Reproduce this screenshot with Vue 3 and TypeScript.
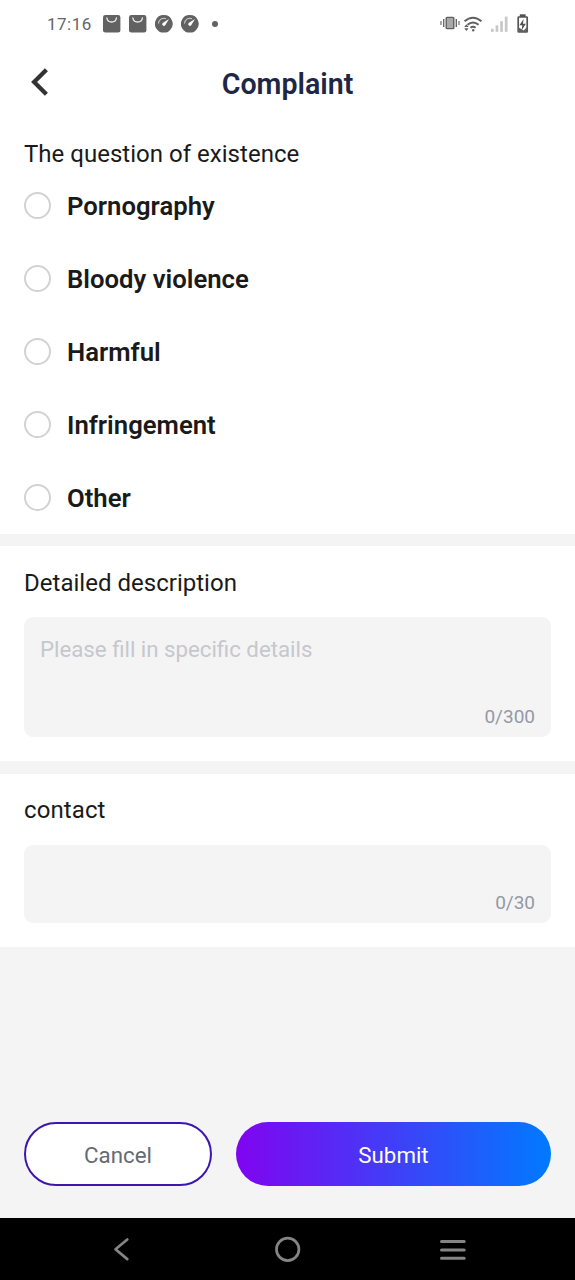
<script setup lang="ts">
import { ref } from 'vue'

const reasons: string[] = ['Pornography', 'Bloody violence', 'Harmful', 'Infringement', 'Other']
const selected = ref<string>('')
const description = ref<string>('')
const contact = ref<string>('')
</script>

<template>
  <div class="screen">
    <div class="status">
      <span class="time">17:16</span>
      <svg v-for="n in 2" :key="'bag' + n" class="status-icon" width="18" height="18" viewBox="0 0 18 18">
        <rect x="0" y="0" width="17.400" height="17.6" rx="2.4" fill="#626262" />
        <path d="M3.900 3c.6 5.300 8.900 5.300 9.500 0" fill="none" stroke="#eee" stroke-width="1.300" stroke-linecap="round" />
      </svg>
      <svg v-for="n in 2" :key="'gauge' + n" class="status-icon" width="18" height="18" viewBox="0 0 18 18">
        <path d="M8.800 0a8.800 8.800 0 0 1 6.300 15L13.200 16.700Q12.300 17.500 10.800 17.500H6.800Q5.300 17.500 4.400 16.700L2.500 15A8.800 8.800 0 0 1 8.800 0z" fill="#626262" />
        <path d="M3.500 8.600A5.400 5.400 0 0 1 11 3.700" fill="none" stroke="#ccc" stroke-width="1.100" />
        <path d="M14 4.100L7.700 7.900a1.700 1.700 0 1 0 2.500 2.300z" fill="#fff" />
      </svg>
      <i class="dot"></i>
      <div class="status-right">
        <svg width="90" height="20" viewBox="0 0 90 20">
          <rect x="6.200" y="3.400" width="7.600" height="11.200" rx="0.800" fill="#a8a8a8" stroke="#606060" stroke-width="1.400" />
          <path d="M3.700 5v8M16.300 5v8" stroke="#686868" stroke-width="1.400" />
          <path d="M1 7v4M19 7v4" stroke="#777" stroke-width="1.300" />
          <g fill="none" stroke="#606060" stroke-width="2">
            <path d="M24.500 7.300Q33 .2 41.500 7.300" />
            <path d="M27.500 10.800Q33 6.200 38.600 10.800" />
            <path d="M30.500 13.800Q33 11.800 35.600 13.800" />
          </g>
          <circle cx="33.200" cy="16.200" r="1.200" fill="#606060" />
          <path d="M26.400 10.200l2.200 2.700h-4.400zM26.400 17l2.200-2.700h-4.400z" fill="#606060" />
          <rect x="51" y="14.800" width="2.700" height="3" fill="#c8c8c8" />
          <rect x="55.600" y="11.400" width="2.700" height="6.400" fill="#c8c8c8" />
          <rect x="60.200" y="7.200" width="2.700" height="10.600" fill="#c8c8c8" />
          <rect x="64.800" y="2.600" width="2.700" height="15.200" fill="#c8c8c8" />
          <rect x="79.800" y="0.300" width="5.800" height="3" fill="#505050" />
          <rect x="78.200" y="3" width="9" height="15" rx="0.600" fill="#fff" stroke="#555" stroke-width="1.700" />
          <path d="M78 13l3.200 2 2.400 1.500 4-4V18H78z" fill="#606060" />
          <path d="M83.600 5l-4.200 6.300h2.900l-.7 5 4.300-6.500H83z" fill="#505050" />
        </svg>
      </div>
    </div>

    <header class="header">
      <button class="back" type="button" aria-label="Back">
        <svg width="20" height="32" viewBox="0 0 20 32">
          <path d="M17.400 2.800L5.100 15L17.400 27.200" fill="none" stroke="#333" stroke-width="4.300" stroke-linejoin="miter" />
        </svg>
      </button>
      <h1>Complaint</h1>
    </header>

    <section class="reasons">
      <h2>The question of existence</h2>
      <label v-for="reason in reasons" :key="reason" class="reason">
        <input v-model="selected" type="radio" name="reason" :value="reason" />
        <span>{{ reason }}</span>
      </label>
    </section>

    <section class="details">
      <h2>Detailed description</h2>
      <div class="field field-large">
        <textarea v-model="description" maxlength="300" placeholder="Please fill in specific details"></textarea>
        <span class="count">{{ description.length }}/300</span>
      </div>
    </section>

    <section class="contact">
      <h2 class="contact-title">contact</h2>
      <div class="field field-small">
        <textarea v-model="contact" maxlength="30"></textarea>
        <span class="count">{{ contact.length }}/30</span>
      </div>
    </section>

    <footer class="actions">
      <button class="cancel" type="button">Cancel</button>
      <button class="submit" type="button">Submit</button>
    </footer>

    <nav class="nav">
      <svg width="30" height="30" viewBox="0 0 30 30">
        <path d="M21.300 5.500L9.500 15.300L21.300 25.100" fill="none" stroke="#858585" stroke-width="2.700" stroke-linecap="round" stroke-linejoin="round" />
      </svg>
      <svg width="30" height="30" viewBox="0 0 30 30">
        <circle cx="15.700" cy="15.400" r="11.200" fill="none" stroke="#858585" stroke-width="2.700" />
      </svg>
      <svg width="30" height="30" viewBox="0 0 30 30">
        <path d="M3.500 7.400h22.700M3.500 15.900h22.700M3.500 24.200h22.700" stroke="#858585" stroke-width="3" stroke-linecap="round" />
      </svg>
    </nav>
  </div>
</template>

<style>
body {
  margin: 0;
  background: #f4f4f4;
}
</style>

<style scoped>
.screen {
  width: 575px;
  height: 1280px;
  display: flex;
  flex-direction: column;
  background: #f4f4f4;
  font-family: Roboto, "Liberation Sans", sans-serif;
  color: #1a1a1a;
  overflow: hidden;
}
.screen * {
  box-sizing: border-box;
}
button,
textarea {
  font-family: inherit;
}
.status {
  height: 48px;
  flex: none;
  display: flex;
  align-items: center;
  padding: 0 45px 0 47px;
  background: #fff;
}
.time {
  width: 56px;
  font-size: 17px;
  line-height: 20px;
  letter-spacing: 0.5px;
  color: #666;
}
.status-icon {
  flex: none;
  margin-right: 8px;
}
.dot {
  width: 6px;
  height: 6px;
  margin-left: 5px;
  border-radius: 50%;
  background: #626262;
}
.status-right {
  margin-left: auto;
  display: flex;
}
.header {
  height: 72px;
  flex: none;
  display: grid;
  grid-template-columns: 60px 1fr 60px;
  align-items: center;
  background: #fff;
}
.back {
  width: 32px;
  height: 32px;
  margin: 0 0 3px 29px;
  padding: 0;
  border: 0;
  background: none;
  display: flex;
}
h1 {
  margin: 0;
  text-align: center;
  font-size: 28.6px;
  line-height: 34px;
  font-weight: 600;
  color: #1e2746;
}
section {
  flex: none;
  padding: 0 24px;
  background: #fff;
}
h2 {
  margin: 0;
  font-size: 24px;
  line-height: 28px;
  font-weight: 400;
  letter-spacing: 0.02px;
}
.reasons {
  height: 414px;
  padding-top: 20px;
}
.reason {
  height: 73px;
  display: flex;
  align-items: center;
  gap: 16px;
  font-size: 25.7px;
  font-weight: 600;
}
.reasons h2 {
  margin-bottom: 1px;
}
.reason input {
  appearance: none;
  width: 27px;
  height: 27px;
  margin: 0;
  border: 2px solid #d2d2d2;
  border-radius: 50%;
  background: #fff;
}
.reason span {
  padding-top: 1px;
  line-height: 30px;
}
.details {
  margin-top: 12px;
  height: 215px;
  padding-top: 23px;
}
.contact {
  margin-top: 13px;
  height: 173px;
  padding-top: 22px;
}
.contact-title {
  letter-spacing: 0.1px;
}
.field {
  display: flex;
  flex-direction: column;
  border-radius: 9px;
  background: #f4f4f4;
  padding: 18px 16px 8px;
}
.field-large {
  height: 120px;
  margin-top: 20px;
}
.field-small {
  height: 78px;
  margin-top: 21px;
}
textarea {
  flex: 1;
  min-height: 0;
  width: 100%;
  padding: 0;
  border: 0;
  outline: 0;
  resize: none;
  overflow: hidden;
  background: none;
  color: #1a1a1a;
  font-size: 22.25px;
  line-height: 28px;
}
textarea::placeholder {
  color: #c6c7ce;
}
.count {
  text-align: right;
  font-size: 19px;
  line-height: 24px;
  color: #9499a5;
}
.actions {
  margin-top: 175px;
  height: 64px;
  flex: none;
  display: flex;
  gap: 24px;
  padding: 0 24px;
}
.actions button {
  height: 64px;
  padding: 2px 0 0;
  border-radius: 32px;
  font-size: 22.3px;
}
.cancel {
  width: 188px;
  border: 2px solid #3c16ae;
  background: #fff;
  color: #666b72;
}
.submit {
  flex: 1;
  border: 0;
  background: linear-gradient(90deg, #8004f0, #007aff);
  color: #fff;
}
.nav {
  margin-top: auto;
  height: 62px;
  flex: none;
  display: flex;
  align-items: center;
  justify-content: space-between;
  padding: 0 107px 0 106px;
  background: #000;
}
</style>
